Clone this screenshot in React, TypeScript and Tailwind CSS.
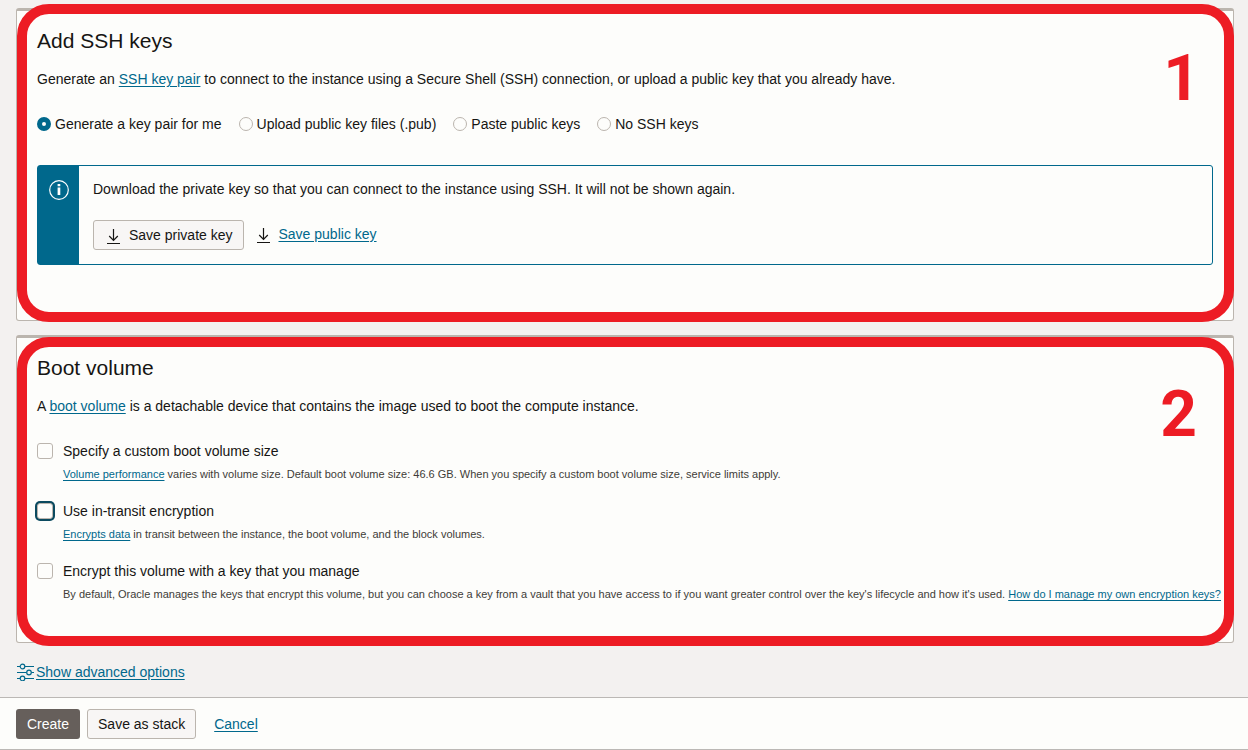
import { useState } from "react"
import type { ReactNode } from "react"

const sshOptions = [
  { id: "generate", label: "Generate a key pair for me" },
  { id: "upload", label: "Upload public key files (.pub)" },
  { id: "paste", label: "Paste public keys" },
  { id: "none", label: "No SSH keys" },
]

function TextLink({ children }: { children: ReactNode }) {
  return (
    <a href="#" className="text-[#00688c] underline underline-offset-2">
      {children}
    </a>
  )
}

function DownloadIcon() {
  return (
    <svg width="13" height="18" viewBox="0 0 13 18" fill="none" stroke="#161513" aria-hidden="true">
      <path d="M6.5 3V14.5M2.2 10L6.5 14.3L10.8 10" strokeWidth="1.2" />
      <path d="M0 17.5H13" />
    </svg>
  )
}

function InfoIcon() {
  return (
    <svg width="20" height="20" viewBox="0 0 20 20" fill="none" aria-hidden="true">
      <circle cx="10" cy="10" r="9.3" stroke="#fff" strokeWidth="1.2" />
      <path d="M8.6 4H11.3V6.2H8.6ZM8.6 7.5H11.3V15H8.6Z" fill="#fff" />
    </svg>
  )
}

function SlidersIcon() {
  return (
    <svg width="18" height="18" viewBox="0 0 18 18" fill="none" stroke="#00688c" aria-hidden="true">
      <path d="M1 3.5H4M9 3.5H18M1 9.5H10.5M15.5 9.5H18M1 15.5H4M9 15.5H18" />
      <circle cx="6.5" cy="3.5" r="2.3" strokeWidth="1.2" />
      <circle cx="13" cy="9.5" r="2.3" strokeWidth="1.2" />
      <circle cx="6.5" cy="15.5" r="2.3" strokeWidth="1.2" />
    </svg>
  )
}

interface SectionCardProps {
  title: string
  step: number
  className: string
  ringClass: string
  stepClass: string
  children: ReactNode
}

function SectionCard({ title, step, className, ringClass, stepClass, children }: SectionCardProps) {
  return (
    <section
      className={`relative rounded-[3px] border border-t-[3px] border-[#bbb5ae] bg-[#fdfdfb] pl-5 pt-4 ${className}`}
    >
      <h2 className="text-[21px] leading-7">{title}</h2>
      {children}
      {/* highlight ring and step number sit over the card */}
      <div
        className={`pointer-events-none absolute left-0 -right-px rounded-[32px] border-10 border-[#ed1c24] ${ringClass}`}
      />
      <span
        className={`pointer-events-none absolute font-[Roboto,sans-serif] text-[64px] leading-16 font-bold text-[#ed1c24] ${stepClass}`}
      >
        {step}
      </span>
    </section>
  )
}

interface CheckOptionProps {
  id: string
  label: string
  focused?: boolean
  children: ReactNode
}

function CheckOption({ id, label, focused, children }: CheckOptionProps) {
  return (
    <div className="grid grid-cols-[16px_1fr] items-center gap-x-2.5 gap-y-[5px]">
      <input
        id={id}
        type="checkbox"
        aria-describedby={`${id}-hint`}
        className={`h-4 w-4 appearance-none rounded-[3px] border border-[#bbb5ae] bg-[#fdfdfb] checked:bg-[#00688c] ${
          focused ? "ring-2 ring-[#0b4a5f]" : ""
        }`}
      />
      <label htmlFor={id} className="leading-5">
        {label}
      </label>
      <p id={`${id}-hint`} className="col-start-2 text-[11px] leading-4 text-[#403c38]">
        {children}
      </p>
    </div>
  )
}

export default function App() {
  const [sshMode, setSshMode] = useState("generate")

  return (
    <div className="bg-[#f3f1f0] font-['Liberation_Sans',Arial,sans-serif] text-sm leading-5 text-[#161513]">
      <main className="flex flex-col gap-3.5 pt-2 pr-3.5 pl-4">
        <SectionCard
          title="Add SSH keys"
          step={1}
          className="pr-5 pb-[55px]"
          ringClass="-top-[7px] -bottom-0.5"
          stepClass="top-9 right-[33px]"
        >
          <p className="mt-3.5">
            Generate an <TextLink>SSH key pair</TextLink> to connect to the instance using a Secure Shell (SSH)
            connection, or upload a public key that you already have.
          </p>
          <div role="radiogroup" aria-label="Add SSH keys" className="mt-[25px] flex flex-wrap gap-x-[17px]">
            {sshOptions.map((option) => (
              <label key={option.id} className="flex items-center gap-1">
                <input
                  type="radio"
                  name="ssh-mode"
                  value={option.id}
                  checked={sshMode === option.id}
                  onChange={() => setSshMode(option.id)}
                  className="h-3.5 w-3.5 appearance-none rounded-full border border-[#bbb5ae] bg-[#fdfdfb] checked:border-5 checked:border-[#00688c]"
                />
                {option.label}
              </label>
            ))}
          </div>
          <div className="mt-[31px] flex rounded-[3px] border border-[#00688c]">
            <div className="flex w-[41px] shrink-0 justify-center bg-[#00688c] pt-3.5">
              <InfoIcon />
            </div>
            <div className="px-3.5 pt-[13px] pb-3.5">
              <p>Download the private key so that you can connect to the instance using SSH. It will not be shown again.</p>
              <div className="mt-[21px] flex items-start gap-[13px]">
                <button
                  type="button"
                  className="flex h-[30px] items-center gap-[9px] rounded-[3px] border border-[#bbb5ae] bg-[#f8f6f5] pr-2.5 pl-[13px]"
                >
                  <DownloadIcon />
                  Save private key
                </button>
                <span className="flex h-7 items-center gap-[9px]">
                  <DownloadIcon />
                  <TextLink>Save public key</TextLink>
                </span>
              </div>
            </div>
          </div>
        </SectionCard>

        <SectionCard
          title="Boot volume"
          step={2}
          className="pr-2 pb-10"
          ringClass="-top-px -bottom-1"
          stepClass="top-[45px] right-9"
        >
          <p className="mt-3.5">
            A <TextLink>boot volume</TextLink> is a detachable device that contains the image used to boot the compute
            instance.
          </p>
          <div className="mt-[25px] flex flex-col gap-[19px]">
            <CheckOption id="custom-size" label="Specify a custom boot volume size">
              <TextLink>Volume performance</TextLink> varies with volume size. Default boot volume size: 46.6 GB. When
              you specify a custom boot volume size, service limits apply.
            </CheckOption>
            <CheckOption id="in-transit" label="Use in-transit encryption" focused>
              <TextLink>Encrypts data</TextLink> in transit between the instance, the boot volume, and the block
              volumes.
            </CheckOption>
            <CheckOption id="own-key" label="Encrypt this volume with a key that you manage">
              By default, Oracle manages the keys that encrypt this volume, but you can choose a key from a vault that
              you have access to if you want greater control over the key's lifecycle and how it's used.{" "}
              <TextLink>How do I manage my own encryption keys?</TextLink>
            </CheckOption>
          </div>
        </SectionCard>
      </main>

      <div className="flex items-center gap-0.5 pt-[19px] pb-[15px] pl-4">
        <SlidersIcon />
        <TextLink>Show advanced options</TextLink>
      </div>

      <footer className="flex items-center gap-[7px] border-y border-[#bbb8b5] bg-[#fdfdfb] px-4 pt-[11px] pb-2.5">
        <button type="button" className="h-[30px] rounded-[3px] bg-[#665f5b] px-[11px] text-white">
          Create
        </button>
        <button type="button" className="h-[30px] rounded-[3px] border border-[#bbb5ae] bg-[#f8f6f5] px-2.5">
          Save as stack
        </button>
        <span className="pl-[11px]">
          <TextLink>Cancel</TextLink>
        </span>
      </footer>
    </div>
  )
}
